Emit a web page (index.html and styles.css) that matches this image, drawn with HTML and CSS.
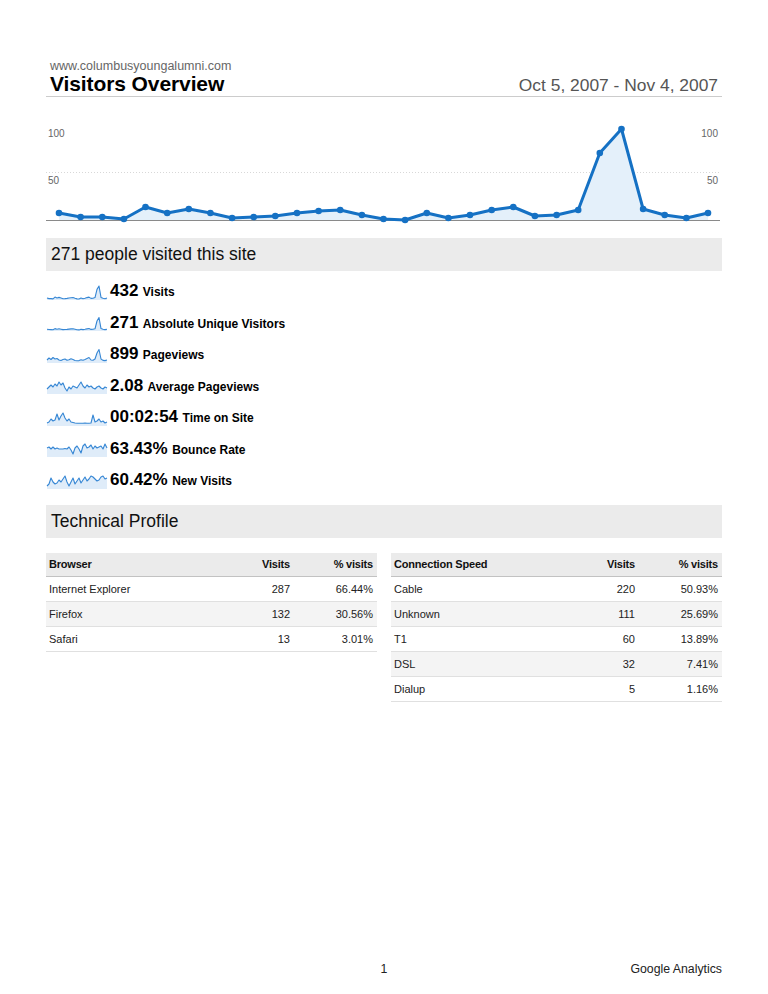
FILE: index.html
```html
<!DOCTYPE html>
<html lang="en">
<head>
<meta charset="utf-8">
<title>Visitors Overview</title>
<link rel="stylesheet" href="styles.css">
</head>
<body>
<div class="page">
  <header class="report-header">
    <div class="site">www.columbusyoungalumni.com</div>
    <div class="title-row">
      <h1 class="title">Visitors Overview</h1>
      <div class="daterange">Oct 5, 2007 - Nov 4, 2007</div>
    </div>
  </header>

  <svg class="chart" width="676" height="124" viewBox="0 0 676 124">
    <line class="grid" x1="0" y1="72.5" x2="674" y2="72.5"/>
    <text class="axis" x="2" y="36.6">100</text>
    <text class="axis" x="2" y="83.6">50</text>
    <text class="axis" x="672" y="36.6" text-anchor="end">100</text>
    <text class="axis" x="672" y="83.6" text-anchor="end">50</text>
    <polygon class="area" points="13,113 34.6,117 56.3,117 77.9,119 99.5,107 121.2,113 142.8,109 164.4,113 186.1,118 207.7,117 229.3,116 251,113 272.6,111 294.2,110 315.9,115 337.5,119 359.1,120 380.8,113 402.4,118 424,115 445.7,110 467.3,107 488.9,116 510.6,115 532.2,110 553.8,53 575.5,29 597.1,109 618.7,115 640.4,118 662,113 662,120 13,120"/>
    <line class="base" x1="0" y1="120.5" x2="674" y2="120.5"/>
    <polyline class="line" points="13,113 34.6,117 56.3,117 77.9,119 99.5,107 121.2,113 142.8,109 164.4,113 186.1,118 207.7,117 229.3,116 251,113 272.6,111 294.2,110 315.9,115 337.5,119 359.1,120 380.8,113 402.4,118 424,115 445.7,110 467.3,107 488.9,116 510.6,115 532.2,110 553.8,53 575.5,29 597.1,109 618.7,115 640.4,118 662,113"/>
    <g class="dots">
      <circle cx="13" cy="113" r="3.3"/><circle cx="34.6" cy="117" r="3.3"/><circle cx="56.3" cy="117" r="3.3"/><circle cx="77.9" cy="119" r="3.3"/><circle cx="99.5" cy="107" r="3.3"/><circle cx="121.2" cy="113" r="3.3"/><circle cx="142.8" cy="109" r="3.3"/><circle cx="164.4" cy="113" r="3.3"/><circle cx="186.1" cy="118" r="3.3"/><circle cx="207.7" cy="117" r="3.3"/><circle cx="229.3" cy="116" r="3.3"/><circle cx="251" cy="113" r="3.3"/><circle cx="272.6" cy="111" r="3.3"/><circle cx="294.2" cy="110" r="3.3"/><circle cx="315.9" cy="115" r="3.3"/><circle cx="337.5" cy="119" r="3.3"/><circle cx="359.1" cy="120" r="3.3"/><circle cx="380.8" cy="113" r="3.3"/><circle cx="402.4" cy="118" r="3.3"/><circle cx="424" cy="115" r="3.3"/><circle cx="445.7" cy="110" r="3.3"/><circle cx="467.3" cy="107" r="3.3"/><circle cx="488.9" cy="116" r="3.3"/><circle cx="510.6" cy="115" r="3.3"/><circle cx="532.2" cy="110" r="3.3"/><circle cx="553.8" cy="53" r="3.3"/><circle cx="575.5" cy="29" r="3.3"/><circle cx="597.1" cy="109" r="3.3"/><circle cx="618.7" cy="115" r="3.3"/><circle cx="640.4" cy="118" r="3.3"/><circle cx="662" cy="113" r="3.3"/>
    </g>
  </svg>

  <h2 class="section-title first">271 people visited this site</h2>
  <ul class="metrics">
    <li class="metric">
      <svg class="spark" width="60" height="16" viewBox="0 0 60 16"><polygon class="spark-fill" points="0,14 2,14.6 4,14.6 6,14.9 8,13.1 10,14 12,13.4 14,14 16,14.7 18,14.6 20,14.4 22,14 24,13.7 26,13.6 28,14.3 30,14.9 32,15 34,14 36,14.7 38,14.3 40,13.6 42,13.1 44,14.4 46,14.3 48,13.6 50,5.4 52,2 54,13.4 56,14.3 58,14.7 60,14 60,16 0,16"/><polyline class="spark-line" points="0,14 2,14.6 4,14.6 6,14.9 8,13.1 10,14 12,13.4 14,14 16,14.7 18,14.6 20,14.4 22,14 24,13.7 26,13.6 28,14.3 30,14.9 32,15 34,14 36,14.7 38,14.3 40,13.6 42,13.1 44,14.4 46,14.3 48,13.6 50,5.4 52,2 54,13.4 56,14.3 58,14.7 60,14"/></svg>
      <span class="metric-text"><span class="metric-value">432</span> <span class="metric-label">Visits</span></span>
    </li>
    <li class="metric">
      <svg class="spark" width="60" height="16" viewBox="0 0 60 16"><polygon class="spark-fill" points="0,14.2 2,14.5 4,14.6 6,14.8 8,13.6 10,14.2 12,13.8 14,14.2 16,14.6 18,14.5 20,14.4 22,14.1 24,13.9 26,13.8 28,14.3 30,14.8 32,14.9 34,14.2 36,14.6 38,14.3 40,13.9 42,13.5 44,14.4 46,14.3 48,13.8 50,6 52,2.5 54,13.6 56,14.3 58,14.6 60,14.2 60,16 0,16"/><polyline class="spark-line" points="0,14.2 2,14.5 4,14.6 6,14.8 8,13.6 10,14.2 12,13.8 14,14.2 16,14.6 18,14.5 20,14.4 22,14.1 24,13.9 26,13.8 28,14.3 30,14.8 32,14.9 34,14.2 36,14.6 38,14.3 40,13.9 42,13.5 44,14.4 46,14.3 48,13.8 50,6 52,2.5 54,13.6 56,14.3 58,14.6 60,14.2"/></svg>
      <span class="metric-text"><span class="metric-value">271</span> <span class="metric-label">Absolute Unique Visitors</span></span>
    </li>
    <li class="metric">
      <svg class="spark" width="60" height="16" viewBox="0 0 60 16"><polygon class="spark-fill" points="0,13 2,11 4,12.5 6,10.5 8,12 10,11.5 12,13 14,13.5 16,12.5 18,12 20,13.3 22,12.8 24,11.8 26,12.5 28,13.5 30,13.8 32,13.6 34,12.8 36,13.3 38,12.5 40,11.5 42,10.5 44,13 46,13.2 48,12 50,6 52,2.5 54,12 56,13.4 58,13.6 60,13 60,16 0,16"/><polyline class="spark-line" points="0,13 2,11 4,12.5 6,10.5 8,12 10,11.5 12,13 14,13.5 16,12.5 18,12 20,13.3 22,12.8 24,11.8 26,12.5 28,13.5 30,13.8 32,13.6 34,12.8 36,13.3 38,12.5 40,11.5 42,10.5 44,13 46,13.2 48,12 50,6 52,2.5 54,12 56,13.4 58,13.6 60,13"/></svg>
      <span class="metric-text"><span class="metric-value">899</span> <span class="metric-label">Pageviews</span></span>
    </li>
    <li class="metric">
      <svg class="spark" width="60" height="16" viewBox="0 0 60 16"><polygon class="spark-fill" points="0,11 2,9 4,7 6,9 8,6 10,8 12,4 14,7 16,5 18,10 20,13 22,9 24,11 26,8 28,9 30,10 32,7 34,4 36,8 38,10 40,7 42,9 44,8 46,10 48,11 50,9 52,8 54,10 56,11 58,9 60,10 60,16 0,16"/><polyline class="spark-line" points="0,11 2,9 4,7 6,9 8,6 10,8 12,4 14,7 16,5 18,10 20,13 22,9 24,11 26,8 28,9 30,10 32,7 34,4 36,8 38,10 40,7 42,9 44,8 46,10 48,11 50,9 52,8 54,10 56,11 58,9 60,10"/></svg>
      <span class="metric-text"><span class="metric-value">2.08</span> <span class="metric-label">Average Pageviews</span></span>
    </li>
    <li class="metric">
      <svg class="spark" width="60" height="16" viewBox="0 0 60 16"><polygon class="spark-fill" points="0,13 2,12 4,9 6,11 8,10 10,4 12,10 14,6 16,3 18,8 20,11 22,9 24,12 26,12.5 28,13 30,13.2 32,13.3 34,13.3 36,13.2 38,13 40,13.2 42,13.3 44,13 46,5 48,12 50,11 52,9 54,12 56,11 58,13 60,12 60,16 0,16"/><polyline class="spark-line" points="0,13 2,12 4,9 6,11 8,10 10,4 12,10 14,6 16,3 18,8 20,11 22,9 24,12 26,12.5 28,13 30,13.2 32,13.3 34,13.3 36,13.2 38,13 40,13.2 42,13.3 44,13 46,5 48,12 50,11 52,9 54,12 56,11 58,13 60,12"/></svg>
      <span class="metric-text"><span class="metric-value">00:02:54</span> <span class="metric-label">Time on Site</span></span>
    </li>
    <li class="metric">
      <svg class="spark" width="60" height="16" viewBox="0 0 60 16"><polygon class="spark-fill" points="0,7 2,6 4,8 6,6 8,8 10,7 12,8 14,8 16,8 18,7.5 20,8 22,6 24,9 26,13 28,7 30,5 32,8 34,12 36,5 38,3 40,7 42,6 44,4 46,8 48,5 50,7 52,6 54,5 56,8 58,3 60,7 60,16 0,16"/><polyline class="spark-line" points="0,7 2,6 4,8 6,6 8,8 10,7 12,8 14,8 16,8 18,7.5 20,8 22,6 24,9 26,13 28,7 30,5 32,8 34,12 36,5 38,3 40,7 42,6 44,4 46,8 48,5 50,7 52,6 54,5 56,8 58,3 60,7"/></svg>
      <span class="metric-text"><span class="metric-value">63.43%</span> <span class="metric-label">Bounce Rate</span></span>
    </li>
    <li class="metric">
      <svg class="spark" width="60" height="16" viewBox="0 0 60 16"><polygon class="spark-fill" points="0,13 2,11 4,5 6,9 8,11 10,10 12,7 14,9 16,6 18,3 20,9 22,13 24,9 26,5 28,11 30,8 32,5 34,10 36,7 38,4 40,8 42,6 44,3 46,4 48,6 50,8 52,7 54,4 56,3 58,6 60,5 60,16 0,16"/><polyline class="spark-line" points="0,13 2,11 4,5 6,9 8,11 10,10 12,7 14,9 16,6 18,3 20,9 22,13 24,9 26,5 28,11 30,8 32,5 34,10 36,7 38,4 40,8 42,6 44,3 46,4 48,6 50,8 52,7 54,4 56,3 58,6 60,5"/></svg>
      <span class="metric-text"><span class="metric-value">60.42%</span> <span class="metric-label">New Visits</span></span>
    </li>
  </ul>

  <h2 class="section-title second">Technical Profile</h2>
  <div class="tables">
    <table class="data">
      <colgroup><col><col class="c-visits"><col class="c-pct"></colgroup>
      <thead><tr><th>Browser</th><th class="num">Visits</th><th class="num">% visits</th></tr></thead>
      <tbody>
        <tr><td>Internet Explorer</td><td class="num">287</td><td class="num">66.44%</td></tr>
        <tr><td>Firefox</td><td class="num">132</td><td class="num">30.56%</td></tr>
        <tr><td>Safari</td><td class="num">13</td><td class="num">3.01%</td></tr>
      </tbody>
    </table>
    <table class="data">
      <colgroup><col><col class="c-visits"><col class="c-pct"></colgroup>
      <thead><tr><th>Connection Speed</th><th class="num">Visits</th><th class="num">% visits</th></tr></thead>
      <tbody>
        <tr><td>Cable</td><td class="num">220</td><td class="num">50.93%</td></tr>
        <tr><td>Unknown</td><td class="num">111</td><td class="num">25.69%</td></tr>
        <tr><td>T1</td><td class="num">60</td><td class="num">13.89%</td></tr>
        <tr><td>DSL</td><td class="num">32</td><td class="num">7.41%</td></tr>
        <tr><td>Dialup</td><td class="num">5</td><td class="num">1.16%</td></tr>
      </tbody>
    </table>
  </div>

  <footer class="footer">
    <span></span>
    <span class="page-num">1</span>
    <span class="brand">Google Analytics</span>
  </footer>
</div>
</body>
</html>
```

FILE: styles.css
```css
* { box-sizing: border-box; }

html, body {
  margin: 0;
  padding: 0;
  background: #ffffff;
}

body {
  font-family: "Liberation Sans", Arial, Helvetica, sans-serif;
  color: #111;
}

.page {
  width: 676px;
  height: 994px;
  margin-left: 46px;
  display: flex;
  flex-direction: column;
}

.site {
  margin-top: 59px;
  padding-left: 4px;
  font-size: 12.5px;
  line-height: 14px;
  color: #666;
}

.title-row {
  display: flex;
  justify-content: space-between;
  align-items: baseline;
  padding: 0 4px 0 4px;
  border-bottom: 1px solid #cccccc;
}

.title {
  margin: 0;
  font-size: 21px;
  line-height: 21px;
  font-weight: bold;
  color: #000;
  letter-spacing: -0.1px;
}

.daterange {
  font-size: 17.4px;
  line-height: 21px;
  color: #555;
}

.chart {
  display: block;
  margin-top: 3px;
  flex: none;
}

.chart .grid {
  stroke: #d8d8d8;
  stroke-width: 1;
  stroke-dasharray: 1 2;
}

.chart .axis {
  font-family: "Liberation Sans", Arial, sans-serif;
  font-size: 10px;
  fill: #666;
}

.chart .area {
  fill: #e4f0fa;
}

.chart .base {
  stroke: #8a8a8a;
  stroke-width: 1;
}

.chart .line {
  fill: none;
  stroke: #1571c4;
  stroke-width: 3;
  stroke-linejoin: round;
  stroke-linecap: round;
}

.chart .dots circle {
  fill: #1571c4;
}

.section-title {
  margin: 0;
  height: 33px;
  line-height: 33px;
  padding-left: 5px;
  background: #ebebeb;
  font-size: 17.5px;
  font-weight: normal;
  color: #111;
  flex: none;
}

.section-title.first { margin-top: 14px; }
.section-title.second { margin-top: 8.5px; }

.metrics {
  list-style: none;
  margin: 5px 0 0 0;
  padding: 0;
}

.metric {
  height: 31.5px;
  display: flex;
  align-items: center;
}

.spark {
  flex: none;
  margin-left: 1px;
  margin-right: 3px;
  overflow: visible;
}

.spark-fill { fill: #dfecf9; }
.spark-line {
  fill: none;
  stroke: #3586d4;
  stroke-width: 1.1;
  stroke-linejoin: round;
}

.metric-text {
  line-height: 20px;
  color: #000;
  white-space: nowrap;
}

.metric-value {
  font-size: 17px;
  font-weight: bold;
}

.metric-label {
  font-size: 12px;
  font-weight: bold;
}

.tables {
  display: grid;
  grid-template-columns: 1fr 1fr;
  column-gap: 14px;
  align-items: start;
  margin-top: 14.5px;
}

.data {
  width: 100%;
  border-collapse: collapse;
  table-layout: fixed;
  font-size: 11px;
  color: #222;
}

.c-visits { width: 60px; }
.c-pct { width: 83px; }

.data th {
  height: 24px;
  padding: 0 4px 0 3px;
  background: #ebebeb;
  border-bottom: 1px solid #c2c2c2;
  font-weight: bold;
  text-align: left;
  color: #111;
  letter-spacing: -0.2px;
}

.data td {
  height: 25px;
  padding: 0 4px 0 3px;
  border-bottom: 1px solid #e0e0e0;
}

.data tbody tr:nth-child(even) td {
  background: #f4f4f4;
}

.data .num { text-align: right; }

.footer {
  margin-top: auto;
  display: grid;
  grid-template-columns: 1fr auto 1fr;
  font-size: 12.3px;
  line-height: 16px;
  padding-bottom: 17px;
  color: #222;
}

.brand { text-align: right; }
```
